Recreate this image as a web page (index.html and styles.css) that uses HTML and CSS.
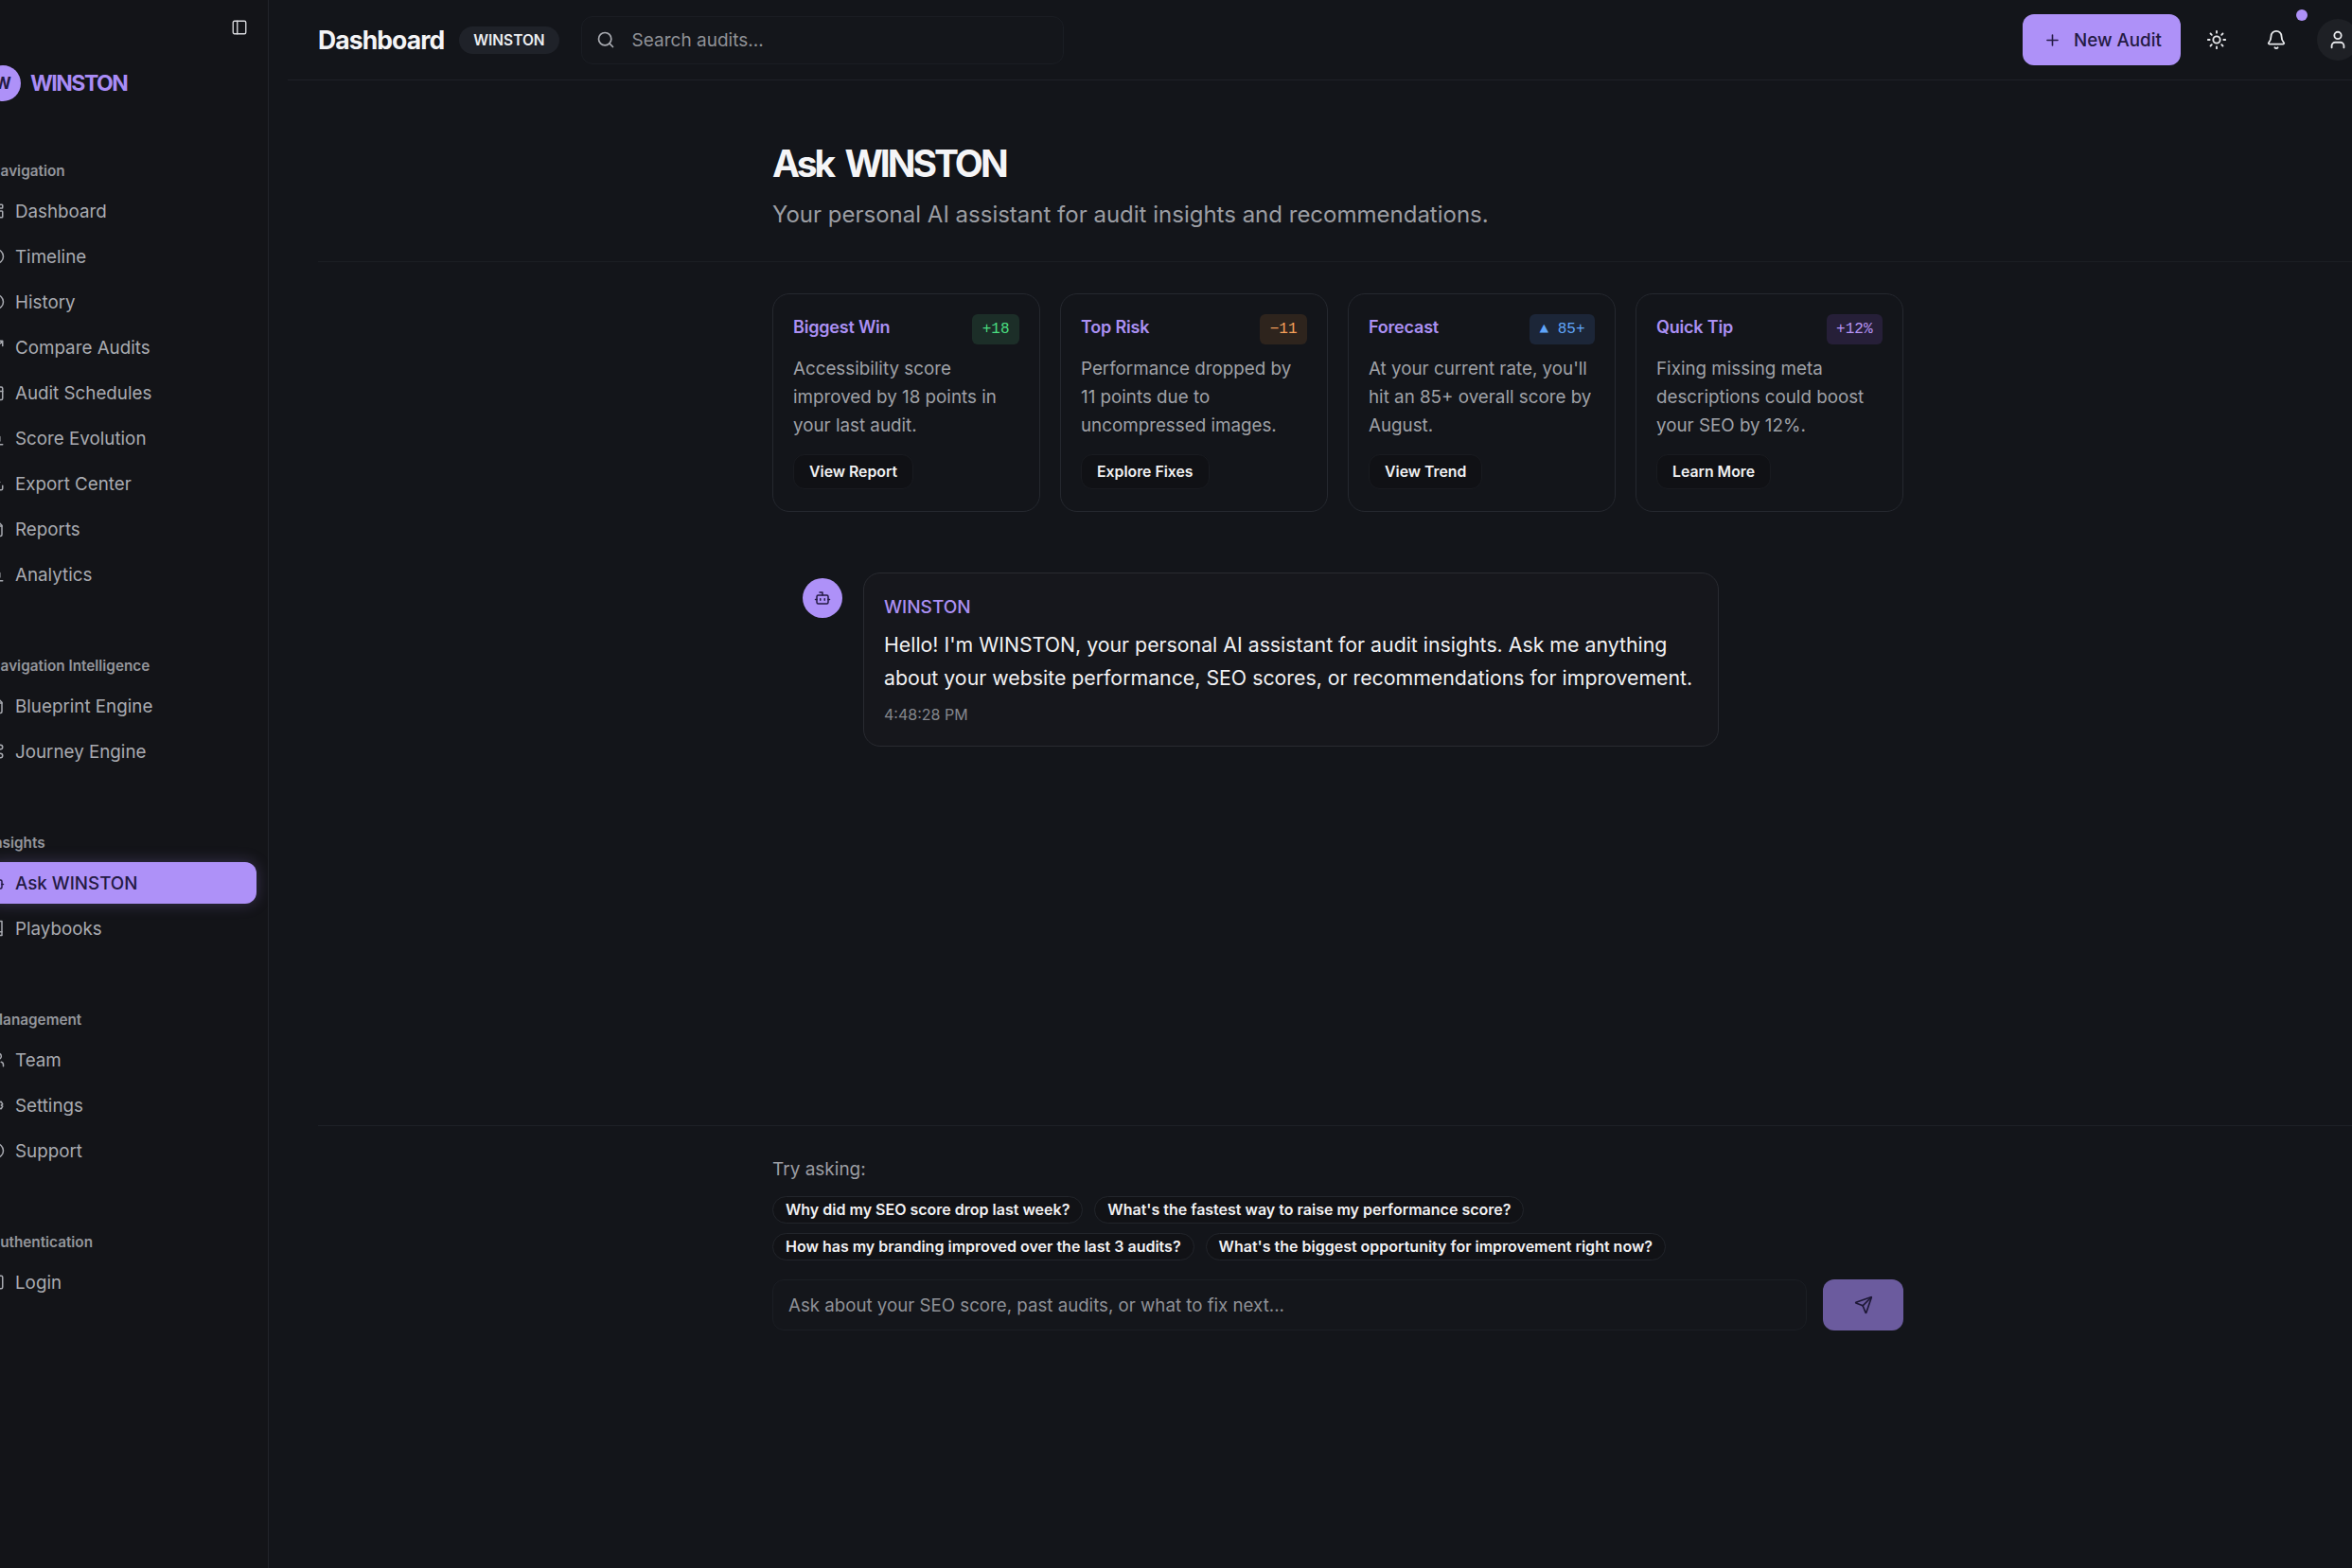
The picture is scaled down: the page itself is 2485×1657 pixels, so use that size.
FILE: index.html
```html
<!DOCTYPE html>
<html>
    <head>
        <meta charset="utf-8" />
        <title>Ask WINSTON</title>
        <link rel="stylesheet" href="styles.css">
    </head>
    <body>
        <svg class="sprite" xmlns="http://www.w3.org/2000/svg">
            <symbol id="i-dash" viewBox="0 0 24 24"><rect x="3" y="3" width="7" height="9" rx="1"/><rect x="14" y="3" width="7" height="5" rx="1"/><rect x="14" y="12" width="7" height="9" rx="1"/><rect x="3" y="16" width="7" height="5" rx="1"/></symbol>
            <symbol id="i-clock" viewBox="0 0 24 24"><circle cx="12" cy="12" r="10"/><path d="M12 6v6l4 2"/></symbol>
            <symbol id="i-compare" viewBox="0 0 24 24"><path d="M3 21L21 3M21 3h-7M21 3v7"/></symbol>
            <symbol id="i-cal" viewBox="0 0 24 24"><path d="M8 2v4M16 2v4"/><rect x="3" y="4" width="18" height="18" rx="2"/><path d="M3 10h18"/></symbol>
            <symbol id="i-chart" viewBox="0 0 24 24"><path d="M3 3v18h18"/><path d="M7 16v-4M12 16V8M17 16v-6"/></symbol>
            <symbol id="i-export" viewBox="0 0 24 24"><path d="M21 15v4a2 2 0 0 1-2 2H5a2 2 0 0 1-2-2v-4"/><path d="M7 10l5 5 5-5"/><path d="M12 15V3"/></symbol>
            <symbol id="i-file" viewBox="0 0 24 24"><path d="M15 2H6a2 2 0 0 0-2 2v16a2 2 0 0 0 2 2h12a2 2 0 0 0 2-2V7z"/><path d="M14 2v6h6M8 13h8M8 17h8"/></symbol>
            <symbol id="i-flow" viewBox="0 0 24 24"><circle cx="18" cy="6" r="3"/><circle cx="18" cy="18" r="3"/><circle cx="6" cy="12" r="3"/><path d="M9 12h3M15 6h-1a2 2 0 0 0-2 2v8a2 2 0 0 0 2 2h1"/></symbol>
            <symbol id="i-bot" viewBox="0 0 24 24"><path d="M12 8V4H8"/><rect x="4" y="8" width="16" height="12" rx="2"/><path d="M2 14h2M20 14h2M15 13v2M9 13v2"/></symbol>
            <symbol id="i-book" viewBox="0 0 24 24"><path d="M4 19.5A2.5 2.5 0 0 1 6.5 17H20V2H6.5A2.5 2.5 0 0 0 4 4.500z"/><path d="M4 19.500A2.500 2.500 0 0 0 6.500 22H20v-5"/></symbol>
            <symbol id="i-team" viewBox="0 0 24 24"><path d="M16 21v-2a4 4 0 0 0-4-4H6a4 4 0 0 0-4 4v2"/><circle cx="9" cy="7" r="4"/><path d="M22 21v-2a4 4 0 0 0-3-3.900M16 3.100a4 4 0 0 1 0 7.800"/></symbol>
            <symbol id="i-gear" viewBox="0 0 24 24"><circle cx="12" cy="12" r="3"/><path d="M19 12l2-1.500-2-3.500-2.400.7-1.600-1L14 4h-4l-.9 2.700-1.600 1L5 7l-2 3.500L5 12l-2 1.500L5 17l2.500-.7 1.600 1L10 20h4l.9-2.700 1.600-1L19 17l2-3.500z"/></symbol>
            <symbol id="i-help" viewBox="0 0 24 24"><circle cx="12" cy="12" r="10"/><path d="M9.100 9a3 3 0 0 1 5.800 1c0 2-3 3-3 3M12 17h.01"/></symbol>
            <symbol id="i-login" viewBox="0 0 24 24"><path d="M15 3h4a2 2 0 0 1 2 2v14a2 2 0 0 1-2 2h-4"/><path d="M10 17l5-5-5-5M15 12H3"/></symbol>
        </svg>

        <div class="app">
            <aside class="sidebar">
                <div class="side-top">
                    <svg class="ico side-toggle" viewBox="0 0 24 24"><rect x="3" y="3" width="18" height="18" rx="2"/><path d="M9 3v18"/></svg>
                </div>
                <div class="brand">
                    <span class="brand-mark">W</span>
                    <span class="brand-name">WINSTON</span>
                </div>

                <div class="side-group first">
                    <div class="side-label">Navigation</div>
                    <a class="side-item"><svg class="ico"><use href="#i-dash"/></svg>Dashboard</a>
                    <a class="side-item"><svg class="ico"><use href="#i-clock"/></svg>Timeline</a>
                    <a class="side-item"><svg class="ico"><use href="#i-clock"/></svg>History</a>
                    <a class="side-item"><svg class="ico"><use href="#i-compare"/></svg>Compare Audits</a>
                    <a class="side-item"><svg class="ico"><use href="#i-cal"/></svg>Audit Schedules</a>
                    <a class="side-item"><svg class="ico"><use href="#i-chart"/></svg>Score Evolution</a>
                    <a class="side-item"><svg class="ico"><use href="#i-export"/></svg>Export Center</a>
                    <a class="side-item"><svg class="ico"><use href="#i-file"/></svg>Reports</a>
                    <a class="side-item"><svg class="ico"><use href="#i-chart"/></svg>Analytics</a>
                </div>

                <div class="side-group">
                    <div class="side-label">Navigation Intelligence</div>
                    <a class="side-item"><svg class="ico"><use href="#i-file"/></svg>Blueprint Engine</a>
                    <a class="side-item"><svg class="ico"><use href="#i-flow"/></svg>Journey Engine</a>
                </div>

                <div class="side-group">
                    <div class="side-label">Insights</div>
                    <a class="side-item active"><svg class="ico"><use href="#i-bot"/></svg>Ask WINSTON</a>
                    <a class="side-item"><svg class="ico"><use href="#i-book"/></svg>Playbooks</a>
                </div>

                <div class="side-group">
                    <div class="side-label">Management</div>
                    <a class="side-item"><svg class="ico"><use href="#i-team"/></svg>Team</a>
                    <a class="side-item"><svg class="ico"><use href="#i-gear"/></svg>Settings</a>
                    <a class="side-item"><svg class="ico"><use href="#i-help"/></svg>Support</a>
                </div>

                <div class="side-group">
                    <div class="side-label">Authentication</div>
                    <a class="side-item"><svg class="ico"><use href="#i-login"/></svg>Login</a>
                </div>
            </aside>

            <main class="main">
                <header class="topbar">
                    <div class="top-left">
                        <h2 class="top-title">Dashboard</h2>
                        <span class="top-pill">WINSTON</span>
                        <div class="search">
                            <svg class="ico search-ico" viewBox="0 0 24 24"><circle cx="11" cy="11" r="8"/><path d="M21 21l-4.300-4.300"/></svg>
                            <span>Search audits...</span>
                        </div>
                    </div>
                    <div class="top-right">
                        <button class="new-audit">
                            <svg class="ico" viewBox="0 0 24 24"><path d="M5 12h14M12 5v14"/></svg>
                            New Audit
                        </button>
                        <svg class="ico top-ico sun" viewBox="0 0 24 24"><circle cx="12" cy="12" r="4"/><path d="M12 2v2M12 20v2M4.930 4.930l1.410 1.410M17.660 17.660l1.410 1.410M2 12h2M20 12h2M6.340 17.660l-1.410 1.410M19.070 4.930l-1.410 1.410"/></svg>
                        <div class="bell">
                            <svg class="ico top-ico" viewBox="0 0 24 24"><path d="M10.300 21a1.940 1.940 0 0 0 3.400 0"/><path d="M3.300 15.300A1 1 0 0 0 4 17h16a1 1 0 0 0 .7-1.700C19.400 14 18 12.500 18 8A6 6 0 0 0 6 8c0 4.500-1.400 6-2.700 7.300"/></svg>
                            <span class="bell-dot"></span>
                        </div>
                        <div class="avatar">
                            <svg class="ico top-ico" viewBox="0 0 24 24"><path d="M19 21v-2a4 4 0 0 0-4-4H9a4 4 0 0 0-4 4v2"/><circle cx="12" cy="7" r="4"/></svg>
                        </div>
                    </div>
                </header>

                <section class="page-head">
                    <div class="wrap">
                        <h1>Ask WINSTON</h1>
                        <p>Your personal AI assistant for audit insights and recommendations.</p>
                    </div>
                </section>

                <section class="chat">
                    <div class="wrap">
                        <div class="cards">
                            <div class="card">
                                <div class="card-top">
                                    <span class="card-title">Biggest Win</span>
                                    <span class="tag green">+18</span>
                                </div>
                                <p>Accessibility score improved by 18 points in your last audit.</p>
                                <button class="card-btn">View Report</button>
                            </div>
                            <div class="card">
                                <div class="card-top">
                                    <span class="card-title">Top Risk</span>
                                    <span class="tag orange">−11</span>
                                </div>
                                <p>Performance dropped by 11 points due to uncompressed images.</p>
                                <button class="card-btn">Explore Fixes</button>
                            </div>
                            <div class="card">
                                <div class="card-top">
                                    <span class="card-title">Forecast</span>
                                    <span class="tag blue">▲ 85+</span>
                                </div>
                                <p>At your current rate, you'll hit an 85+ overall score by August.</p>
                                <button class="card-btn">View Trend</button>
                            </div>
                            <div class="card">
                                <div class="card-top">
                                    <span class="card-title">Quick Tip</span>
                                    <span class="tag purple">+12%</span>
                                </div>
                                <p>Fixing missing meta descriptions could boost your SEO by 12%.</p>
                                <button class="card-btn">Learn More</button>
                            </div>
                        </div>

                        <div class="msg">
                            <div class="msg-avatar">
                                <svg class="ico" viewBox="0 0 24 24"><path d="M12 8V4H8"/><rect x="4" y="8" width="16" height="12" rx="2"/><path d="M2 14h2M20 14h2M15 13v2M9 13v2"/></svg>
                            </div>
                            <div class="bubble">
                                <div class="bubble-name">WINSTON</div>
                                <div class="bubble-text">Hello! I'm WINSTON, your personal AI assistant for audit insights. Ask me anything about your website performance, SEO scores, or recommendations for improvement.</div>
                                <div class="bubble-time">4:48:28 PM</div>
                            </div>
                        </div>
                    </div>
                </section>

                <section class="composer">
                    <div class="wrap">
                        <div class="try">Try asking:</div>
                        <div class="chips">
                            <span class="chip">Why did my SEO score drop last week?</span>
                            <span class="chip">What's the fastest way to raise my performance score?</span>
                            <span class="chip">How has my branding improved over the last 3 audits?</span>
                            <span class="chip">What's the biggest opportunity for improvement right now?</span>
                        </div>
                        <div class="ask-row">
                            <div class="ask-input">Ask about your SEO score, past audits, or what to fix next...</div>
                            <button class="ask-send">
                                <svg class="ico" viewBox="0 0 24 24"><path d="M14.500 21.700a.5.500 0 0 0 .9 0l6.500-19a.5.500 0 0 0-.6-.6l-19 6.500a.5.500 0 0 0 0 .9l7.900 3.200a2 2 0 0 1 1.100 1.100z"/><path d="M21.900 2.100 10.900 13.100"/></svg>
                            </button>
                        </div>
                    </div>
                </section>
            </main>
        </div>
    </body>
</html>
```

FILE: styles.css
```css
* {
    margin: 0;
    padding: 0;
    box-sizing: border-box;
}

html, body {
    width: 2485px;
    height: 1657px;
    overflow: hidden;
    background-color: #13151a;
    font-family: Inter, "Liberation Sans", sans-serif;
}

.sprite {
    display: none;
}

.ico {
    width: 18px;
    height: 18px;
    flex: none;
    fill: none;
    stroke: currentColor;
    stroke-width: 2;
    stroke-linecap: round;
    stroke-linejoin: round;
}

.app {
    display: flex;
    height: 1657px;
}

/* sidebar, its left edge is cut off by the window */
.sidebar {
    width: 284px;
    flex: none;
    height: 100%;
    overflow: hidden;
    background-color: #131418;
    border-right: 1px solid #22242a;
    color: #a9abb1;
}

.side-top {
    display: flex;
    justify-content: flex-end;
    height: 58px;
    padding: 20px 21px 0 0;
}

.side-toggle {
    color: #d9dadd;
    stroke-width: 1.800;
}

.brand {
    display: flex;
    align-items: center;
    gap: 10px;
    height: 38px;
    margin: 11px 0 0 -16px;
}

.brand-mark {
    width: 38px;
    height: 38px;
    border-radius: 50%;
    background-color: #ae91f8;
    color: #241a44;
    display: flex;
    align-items: center;
    justify-content: center;
    font-size: 17px;
    font-weight: 700;
}

.brand-name {
    color: #a98cf5;
    font-size: 23px;
    font-weight: 700;
    letter-spacing: -1.5px;
}

.side-group {
    margin: 63px 12px 0 -11px;
}

.side-group.first {
    margin-top: 62px;
}

.side-label {
    height: 24px;
    line-height: 24px;
    margin-bottom: 8px;
    font-size: 15.300px;
    font-weight: 600;
    color: #94969c;
}

.side-item {
    display: flex;
    align-items: center;
    gap: 11px;
    height: 44px;
    margin: 0 0 4px -2px;
    font-size: 18.800px;
    border-radius: 12px;
}

.side-item.active {
    background-color: #ae91f8;
    color: #241a44;
    font-weight: 500;
    box-shadow: 0 0 16px rgba(174, 145, 248, 0.25);
}

/* main column */
.main {
    flex: 1;
    min-width: 0;
    display: flex;
    flex-direction: column;
}

.wrap {
    width: 1195px;
    margin-left: 532px;
}

.topbar {
    height: 85px;
    flex: none;
    margin-left: 20px;
    padding-left: 32px;
    display: flex;
    align-items: center;
    justify-content: space-between;
    border-bottom: 1px solid #1e2127;
}

.top-left {
    display: flex;
    align-items: center;
}

.top-title {
    font-size: 26.500px;
    font-weight: 700;
    letter-spacing: -0.9px;
    color: #f4f4f6;
}

.top-pill {
    margin-left: 16px;
    height: 29px;
    line-height: 29px;
    padding: 0 15px;
    border-radius: 15px;
    background-color: #1f2229;
    color: #eceef1;
    font-size: 15.500px;
    font-weight: 600;
}

.search {
    display: flex;
    align-items: center;
    gap: 18px;
    width: 510px;
    height: 51px;
    margin-left: 23px;
    padding-left: 15px;
    border: 1px solid #1a1d23;
    border-radius: 12px;
    background-color: #14161b;
    color: #8f9197;
    font-size: 19px;
}

.search-ico {
    width: 20px;
    height: 20px;
    color: #a9abb1;
}

.top-right {
    display: flex;
    align-items: center;
}

.new-audit {
    display: flex;
    align-items: center;
    gap: 13px;
    width: 167px;
    height: 54px;
    padding-left: 22px;
    margin-left: 1px;
    border: 0;
    border-radius: 12px;
    background-color: #ae91f8;
    color: #241a44;
    font-family: inherit;
    font-size: 18.800px;
    font-weight: 500;
}

.new-audit .ico {
    width: 19px;
    height: 19px;
}

.top-ico {
    width: 22px;
    height: 22px;
    color: #e6e7ea;
}

.sun {
    margin-left: 27px;
}

.bell {
    position: relative;
    margin-left: 41px;
    display: flex;
}

.bell-dot {
    position: absolute;
    top: -21px;
    right: -22px;
    width: 12px;
    height: 12px;
    border-radius: 50%;
    background-color: #ae91f8;
}

.avatar {
    width: 44px;
    height: 44px;
    margin: 0 -7px 0 32px;
    flex: none;
    border-radius: 50%;
    background-color: #1e2025;
    display: flex;
    align-items: center;
    justify-content: center;
}

.page-head {
    height: 192px;
    flex: none;
    margin-left: 52px;
    border-bottom: 1px solid #1b1e24;
    padding-top: 64px;
}

.page-head .wrap {
    margin-left: 480px;
}

.page-head h1 {
    font-size: 39px;
    line-height: 48px;
    font-weight: 700;
    letter-spacing: -3px;
    word-spacing: 6px;
    color: #f5f5f7;
}

.page-head p {
    margin-top: 14px;
    font-size: 24px;
    line-height: 32px;
    color: #9b9da3;
}

.chat {
    height: 912px;
    flex: none;
    padding-top: 33px;
}

.cards {
    display: grid;
    grid-template-columns: repeat(4, 1fr);
    gap: 21px;
}

.card {
    height: 231px;
    padding: 21px;
    border: 1px solid #25282f;
    border-radius: 18px;
    background-color: #13151a;
}

.card-top {
    display: flex;
    justify-content: space-between;
    align-items: flex-start;
    height: 32px;
}

.card-title {
    font-size: 18px;
    line-height: 27px;
    font-weight: 600;
    letter-spacing: -0.2px;
    color: #ab90f3;
}

.tag {
    height: 32px;
    line-height: 33px;
    padding: 0 10.500px;
    border-radius: 6px;
    font-family: "Liberation Mono", monospace;
    font-size: 16px;
}

.tag.green {
    background-color: #1c2e28;
    color: #4ade80;
}

.tag.orange {
    background-color: #2e241d;
    color: #f5a05a;
}

.tag.blue {
    background-color: #1c2638;
    color: #60a5fa;
}

.tag.purple {
    background-color: #261f38;
    color: #b794f6;
}

.card p {
    margin-top: 11px;
    height: 91px;
    font-size: 18.800px;
    line-height: 30px;
    color: #9fa1a7;
}

.card-btn {
    margin-top: 14px;
    height: 37px;
    padding: 0 16px;
    border: 1px solid #191b20;
    border-radius: 12px;
    background-color: #101115;
    color: #f1f1f3;
    font-family: inherit;
    font-size: 15.800px;
    font-weight: 600;
}

.msg {
    display: flex;
    gap: 22px;
    margin-top: 64px;
    padding-left: 32px;
}

.msg-avatar {
    width: 42px;
    height: 42px;
    margin-top: 6px;
    flex: none;
    border-radius: 50%;
    background-color: #ae91f8;
    color: #241a44;
    display: flex;
    align-items: center;
    justify-content: center;
}

.bubble {
    width: 904px;
    height: 184px;
    padding: 21px 16px 21px 21px;
    border: 1px solid #292b31;
    border-radius: 18px;
    background-color: #16171c;
}

.bubble-name {
    font-size: 19px;
    line-height: 30px;
    font-weight: 500;
    color: #ab90f3;
}

.bubble-text {
    margin-top: 7px;
    font-size: 21.300px;
    line-height: 35px;
    color: #f1f1f3;
}

.bubble-time {
    margin-top: 9px;
    font-size: 16px;
    line-height: 24px;
    color: #85878d;
}

.composer {
    flex: 1;
    margin-left: 52px;
    border-top: 1px solid #1d2026;
    padding-top: 32px;
}

.composer .wrap {
    margin-left: 480px;
}

.try {
    font-size: 19px;
    line-height: 28px;
    color: #9b9da3;
}

.chips {
    display: flex;
    flex-wrap: wrap;
    gap: 10px 12px;
    width: 1195px;
    margin-top: 14px;
}

.chip {
    height: 29px;
    line-height: 27px;
    padding: 0 13px;
    border: 1px solid #22252b;
    border-radius: 15px;
    background-color: #111216;
    color: #f1f1f3;
    font-size: 16px;
    font-weight: 600;
}

.ask-row {
    display: flex;
    gap: 17px;
    margin-top: 20px;
}

.ask-input {
    flex: 1;
    height: 54px;
    line-height: 53px;
    padding-left: 16px;
    border: 1px solid #1b1e24;
    border-radius: 12px;
    background-color: #14161b;
    color: #8f9197;
    font-size: 18.700px;
}

.ask-send {
    width: 85px;
    height: 54px;
    border: 0;
    border-radius: 12px;
    background-color: #6b5b9e;
    color: #1e1836;
    display: flex;
    align-items: center;
    justify-content: center;
}

.ask-send .ico {
    width: 20px;
    height: 20px;
}
```
